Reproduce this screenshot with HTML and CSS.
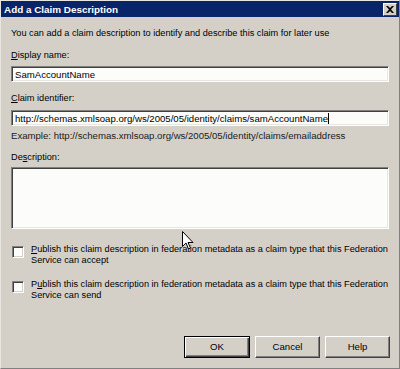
FILE: index.html
```html
<!DOCTYPE html>
<html>
<head>
<meta charset="utf-8">
<link rel="stylesheet" href="styles.css">
</head>
<body>
<div class="window">
  <div class="titlebar">
    <span class="title">Add a Claim Description</span>
    <span class="close"><svg width="8" height="7" viewBox="0 0 8 7"><path d="M0 0h2l2 2 2-2h2L5 3.5 8 7H6L4 5 2 7H0l3-3.5z" fill="#000"/></svg></span>
  </div>
  <div class="content">
    <div class="intro">You can add a claim description to identify and describe this claim for later use</div>
    <div class="label l-display"><u>D</u>isplay name:</div>
    <div class="input i-display">SamAccountName</div>
    <div class="label l-claim"><u>C</u>laim identifier:</div>
    <div class="input i-claim">http://schemas.xmlsoap.org/ws/2005/05/identity/claims/samAccountName<span class="caret"></span></div>
    <div class="example">Example: http://schemas.xmlsoap.org/ws/2005/05/identity/claims/emailaddress</div>
    <div class="label l-desc">De<u>s</u>cription:</div>
    <div class="textarea"></div>
    <div class="check c-accept">
      <span class="box"></span>
      <span class="ctext"><u>P</u>ublish this claim description in federation metadata as a claim type that this Federation<br>Service can accept</span>
    </div>
    <div class="check c-send">
      <span class="box"></span>
      <span class="ctext">P<u>u</u>blish this claim description in federation metadata as a claim type that this Federation<br>Service can send</span>
    </div>
    <div class="buttons">
      <div class="btn default"><span>OK</span></div>
      <div class="btn"><span>Cancel</span></div>
      <div class="btn"><span>Help</span></div>
    </div>
  </div>
  <svg class="cursor" width="12" height="19" viewBox="0 0 12 19"><path d="M0.5 0.5v15l3.5-3.5 2.5 6 2-1-2.5-5.5h5z" fill="#fff" stroke="#000" stroke-width="1"/></svg>
</div>
</body>
</html>
```

FILE: styles.css
```css
html, body {
  margin: 0;
  padding: 0;
  background: #d4d0c8;
}
.window {
  position: relative;
  width: 400px;
  height: 369px;
  box-sizing: border-box;
  display: flex;
  flex-direction: column;
  background: #d4d0c8;
  border-top: 1px solid #e8e6e0;
  border-left: 1px solid #e8e6e0;
  border-right: 1px solid #808080;
  border-bottom: 1px solid #808080;
  font-family: "Liberation Sans", Arial, sans-serif;
  font-size: 9.2px;
  color: #000;
  overflow: hidden;
}
.titlebar {
  flex: none;
  height: 16px;
  background: #0a246a;
  display: flex;
  align-items: center;
  justify-content: space-between;
  padding: 0 2px 0 3px;
}
.title {
  color: #fff;
  font-weight: bold;
  font-size: 9.9px;
  font-family: "Liberation Sans", Arial, sans-serif;
}
.close {
  width: 12px;
  height: 11px;
  background: #d4d0c8;
  border-top: 1px solid #fff;
  border-left: 1px solid #fff;
  border-right: 1px solid #404040;
  border-bottom: 1px solid #404040;
  display: flex;
  align-items: center;
  justify-content: center;
}
.content {
  flex: 1;
  display: flex;
  flex-direction: column;
  padding: 0 9px 10px 10px;
  line-height: 12px;
  white-space: nowrap;
}
.intro { margin-top: 10px; }
.l-display { margin-top: 10px; }
.l-claim { margin-top: 10px; }
.l-desc { margin-top: 9px; }
.input {
  box-sizing: border-box;
  height: 16px;
  width: 378px;
  background: #fcfdfa;
  border-top: 1px solid #808080;
  border-left: 1px solid #808080;
  border-right: 1px solid #fff;
  border-bottom: 1px solid #fff;
  box-shadow: inset 1px 1px 0 #404040, inset -1px -1px 0 #e8e6e0;
  padding: 2px 0 0 3px;
}
.i-display { margin-top: 5px; font-size: 9.6px; }
.i-claim { margin-top: 6px; font-size: 9.6px; }
.caret {
  display: inline-block;
  width: 1px;
  height: 11px;
  background: #000;
  vertical-align: -2px;
}
.example { margin-top: 4px; color: #202020; font-size: 9.6px; }
.textarea {
  margin-top: 4px;
  box-sizing: border-box;
  width: 378px;
  height: 62px;
  background: #fcfdfa;
  border-top: 1px solid #808080;
  border-left: 1px solid #808080;
  border-right: 1px solid #fff;
  border-bottom: 1px solid #fff;
  box-shadow: inset 1px 1px 0 #404040, inset -1px -1px 0 #e8e6e0;
}
.check {
  display: flex;
  align-items: flex-start;
  line-height: 11px;
}
.c-accept { margin-top: 15px; }
.c-send { margin-top: 13px; }
.box {
  flex: none;
  box-sizing: border-box;
  width: 12px;
  height: 12px;
  margin: 2px 7px 0 1px;
  background: #fcfdfa;
  border-top: 1px solid #808080;
  border-left: 1px solid #808080;
  border-right: 1px solid #fff;
  border-bottom: 1px solid #fff;
  box-shadow: inset 1px 1px 0 #404040, inset -1px -1px 0 #d4d0c8;
}
.buttons {
  display: flex;
  justify-content: flex-end;
  gap: 5px;
  margin-top: auto;
  font-size: 9.6px;
}
.btn {
  box-sizing: border-box;
  width: 65px;
  height: 22px;
  display: flex;
  align-items: center;
  justify-content: center;
  border-top: 1px solid #fff;
  border-left: 1px solid #fff;
  border-right: 1px solid #404040;
  border-bottom: 1px solid #404040;
  box-shadow: inset -1px -1px 0 #808080;
}
.btn.default {
  border: 1px solid #000;
  box-shadow: inset 1px 1px 0 #fff, inset -1px -1px 0 #404040, inset -2px -2px 0 #808080;
  width: 66px;
}
.cursor {
  position: absolute;
  left: 181px;
  top: 230px;
}
```
